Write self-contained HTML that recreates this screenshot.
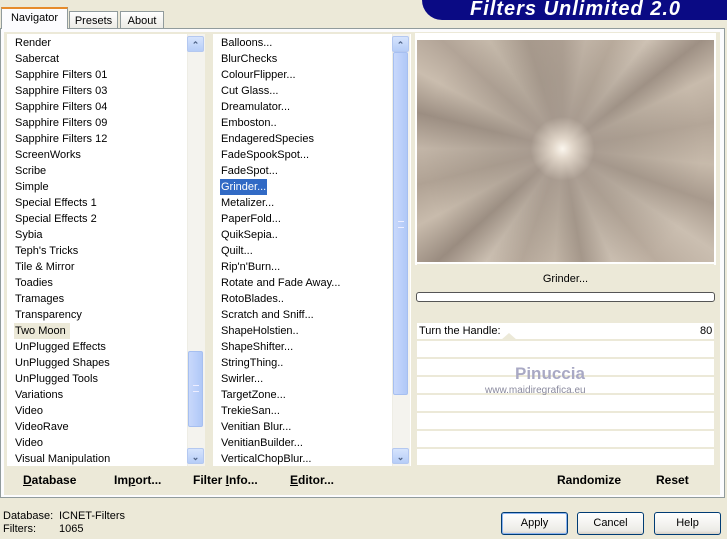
<!DOCTYPE html>
<html><head><style>
*{margin:0;padding:0;box-sizing:border-box}
body{width:727px;height:539px;background:#ece9d8;font-family:"Liberation Sans",sans-serif;font-size:11px;color:#000;position:relative;overflow:hidden}
.a{position:absolute}
.tab{position:absolute;border:1px solid #919b9c;border-bottom:none;background:linear-gradient(#fff,#ecebe5);text-align:center;font-size:11px;padding-top:3px}
.list{position:absolute;background:#fff}
.list div{position:absolute;left:7px;height:16px;line-height:16px;white-space:nowrap;padding:0 1px}
.sb{position:absolute;background:#f4f3ee;border-left:1px solid #eeede5}
.btn{position:absolute;width:17px;height:16px;background:linear-gradient(#d6e4fd,#b6cdf7);border:1px solid #b4c8f0;border-radius:2px;color:#4d6185;font-size:9px;text-align:center;line-height:14px;font-weight:bold}
.thumb{position:absolute;background:linear-gradient(90deg,#c8d8fb,#bcd0fa,#b0c8f6);border:1px solid #a6bff0;border-radius:2px}
.b{position:absolute;font-weight:bold;font-size:12px}
.pb{position:absolute;height:23px;border:1px solid #003c74;border-radius:3px;background:linear-gradient(#fff,#ecebe6 85%,#d6d0c5);text-align:center;line-height:21px;font-size:11px}
.row{position:absolute;left:417px;width:297px;height:16px;background:#fff}
</style></head><body>
<div class="a" style="left:422px;top:0;width:305px;height:20px;background:#0a0a84;border-bottom-left-radius:20px"></div>
<div class="a" style="left:470px;top:-2px;color:#fff;font-weight:bold;font-style:italic;font-size:20px;letter-spacing:1px">Filters Unlimited 2.0</div>

<div class="a" style="left:0;top:28px;width:725px;height:470px;border:1px solid #919b9c;background:#fcfcfe"></div>
<div class="tab" style="left:1px;width:67px;background:#fcfcfe;border-top:2px solid #e68b2c;top:7px;height:22px">Navigator</div>
<div class="tab" style="left:69px;top:11px;width:49px;height:17px">Presets</div>
<div class="tab" style="left:120px;top:11px;width:44px;height:17px">About</div>

<div class="a" style="left:4px;top:32px;width:716px;height:463px;background:#ece9d8"></div>

<div class="list" style="left:7px;top:34px;width:198px;height:432px">
<div style="top:1px">Render</div><div style="top:17px">Sabercat</div><div style="top:33px">Sapphire Filters 01</div><div style="top:49px">Sapphire Filters 03</div><div style="top:65px">Sapphire Filters 04</div><div style="top:81px">Sapphire Filters 09</div><div style="top:97px">Sapphire Filters 12</div><div style="top:113px">ScreenWorks</div><div style="top:129px">Scribe</div><div style="top:145px">Simple</div><div style="top:161px">Special Effects 1</div><div style="top:177px">Special Effects 2</div><div style="top:193px">Sybia</div><div style="top:209px">Teph's Tricks</div><div style="top:225px">Tile &amp; Mirror</div><div style="top:241px">Toadies</div><div style="top:257px">Tramages</div><div style="top:273px">Transparency</div><div style="top:289px;background:#ece9d8;padding-right:4px">Two Moon</div><div style="top:305px">UnPlugged Effects</div><div style="top:321px">UnPlugged Shapes</div><div style="top:337px">UnPlugged Tools</div><div style="top:353px">Variations</div><div style="top:369px">Video</div><div style="top:385px">VideoRave</div><div style="top:401px">Video</div><div style="top:417px">Visual Manipulation</div>
<div class="sb" style="left:180px;top:0;width:18px;height:432px"></div>
<div class="btn" style="left:180px;top:2px">&#8963;</div>
<div class="thumb" style="left:181px;top:317px;width:15px;height:76px"><span style="position:absolute;left:4px;top:33px;width:6px;height:7px;border-top:1px solid #eef;border-bottom:1px solid #eef"></span></div>
<div class="btn" style="left:180px;top:414px">&#8964;</div>
</div>

<div class="list" style="left:213px;top:34px;width:198px;height:432px">
<div style="top:1px">Balloons...</div><div style="top:17px">BlurChecks</div><div style="top:33px">ColourFlipper...</div><div style="top:49px">Cut Glass...</div><div style="top:65px">Dreamulator...</div><div style="top:81px">Emboston..</div><div style="top:97px">EndageredSpecies</div><div style="top:113px">FadeSpookSpot...</div><div style="top:129px">FadeSpot...</div><div style="top:145px;background:#316ac5;color:#fff">Grinder...</div><div style="top:161px">Metalizer...</div><div style="top:177px">PaperFold...</div><div style="top:193px">QuikSepia..</div><div style="top:209px">Quilt...</div><div style="top:225px">Rip'n'Burn...</div><div style="top:241px">Rotate and Fade Away...</div><div style="top:257px">RotoBlades..</div><div style="top:273px">Scratch and Sniff...</div><div style="top:289px">ShapeHolstien..</div><div style="top:305px">ShapeShifter...</div><div style="top:321px">StringThing..</div><div style="top:337px">Swirler...</div><div style="top:353px">TargetZone...</div><div style="top:369px">TrekieSan...</div><div style="top:385px">Venitian Blur...</div><div style="top:401px">VenitianBuilder...</div><div style="top:417px">VerticalChopBlur...</div>
<div class="sb" style="left:179px;top:0;width:18px;height:432px"></div>
<div class="btn" style="left:179px;top:2px">&#8963;</div>
<div class="thumb" style="left:180px;top:18px;width:15px;height:343px"><span style="position:absolute;left:4px;top:168px;width:6px;height:7px;border-top:1px solid #eef;border-bottom:1px solid #eef"></span></div>
<div class="btn" style="left:179px;top:414px">&#8964;</div>
</div>

<div class="a" style="left:415px;top:33px;width:301px;height:232px;background:#fff"></div>
<div class="a" style="left:417px;top:40px;width:297px;height:222px;background:
radial-gradient(circle at 49% 49%,#fbf6ee 0,#e2d7ca 10px,rgba(165,152,141,0.85) 32px,rgba(160,148,136,0.5) 70px,rgba(160,148,136,0) 140px),
conic-gradient(from 0deg at 49% 49%,#b0a295 0deg,#c9bcae 12deg,#bcae9f 25deg,#cfc3b5 38deg,#9e9084 52deg,#c8bbac 64deg,#b4a698 80deg,#c7baab 96deg,#a89a8d 110deg,#cbbfb1 124deg,#baac9e 140deg,#d0c4b6 156deg,#a6988b 170deg,#c9bcad 184deg,#b8aa9c 200deg,#cdc1b3 214deg,#9a8c80 228deg,#c8bbac 242deg,#b0a294 256deg,#c2b5a7 270deg,#9c8e82 284deg,#cabdae 298deg,#b2a497 312deg,#c8bcad 326deg,#a89a8d 342deg,#b0a295 360deg)"></div>
<div class="a" style="left:417px;top:264px;width:297px;height:58px;background:#ece9d8"></div>
<div class="a" style="left:417px;top:273px;width:297px;text-align:center">Grinder...</div>
<div class="a" style="left:416px;top:292px;width:299px;height:10px;border:1px solid #555;border-radius:3px;background:#fff"></div>
<div class="row" style="top:323px"></div>
<div class="a" style="left:419px;top:325px">Turn the Handle:</div>
<div class="a" style="left:700px;top:325px">80</div>
<div class="a" style="left:501px;top:333px;width:0;height:0;border-left:8px solid transparent;border-right:8px solid transparent;border-bottom:7px solid #ece9d8"></div>
<div class="row" style="top:341px"></div><div class="row" style="top:359px"></div><div class="row" style="top:377px"></div><div class="row" style="top:395px"></div><div class="row" style="top:413px"></div><div class="row" style="top:431px"></div><div class="row" style="top:449px;height:16px"></div>
<div class="a" style="left:515px;top:364px;color:#a9a9c4;font-size:17px;font-weight:bold">Pinuccia</div>
<div class="a" style="left:485px;top:385px;color:#8a8a9e;font-size:10px">www.maidiregrafica.eu</div>

<div class="b" style="left:23px;top:473px"><u>D</u>atabase</div>
<div class="b" style="left:114px;top:473px">Im<u>p</u>ort...</div>
<div class="b" style="left:193px;top:473px">Filter <u>I</u>nfo...</div>
<div class="b" style="left:290px;top:473px"><u>E</u>ditor...</div>
<div class="b" style="left:557px;top:473px">Randomize</div>
<div class="b" style="left:656px;top:473px">Reset</div>

<div class="a" style="left:3px;top:510px;line-height:13px">Database:<br>Filters:</div>
<div class="a" style="left:59px;top:510px;line-height:13px">ICNET-Filters<br>1065</div>
<div class="pb" style="left:501px;top:512px;width:67px;box-shadow:inset 0 0 0 1px #8cb4f0">Apply</div>
<div class="pb" style="left:577px;top:512px;width:67px">Cancel</div>
<div class="pb" style="left:654px;top:512px;width:67px">Help</div>
</body></html>
